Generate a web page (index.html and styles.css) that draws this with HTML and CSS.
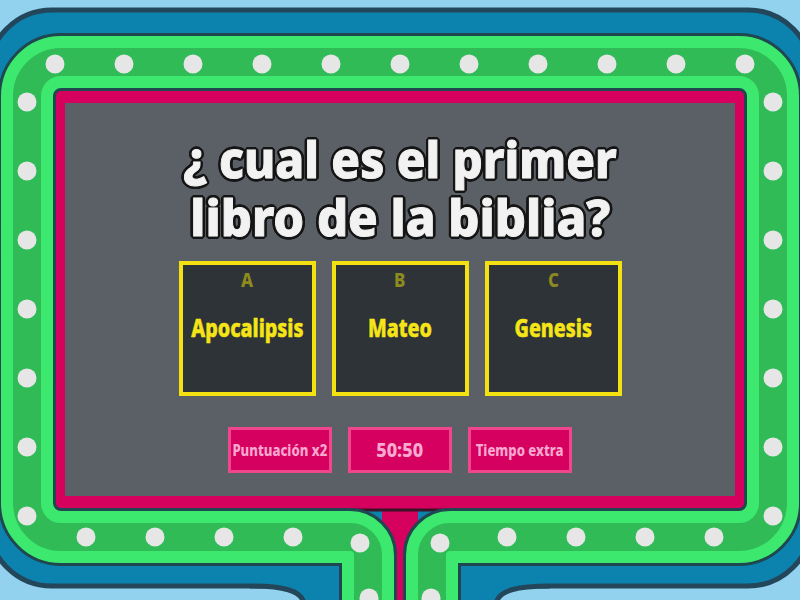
FILE: index.html
```html
<!DOCTYPE html>
<html lang="es">
<head>
<meta charset="utf-8">
<title>Gameshow quiz</title>
<link rel="stylesheet" href="styles.css">
</head>
<body>
<div class="stage">
  <svg class="frame" width="800" height="600" viewBox="0 0 800 600" aria-hidden="true">
    <rect x="0" y="0" width="800" height="600" fill="#93d2ee"/>
    <rect x="-12" y="10" width="824" height="576" rx="64" fill="#0c82af" stroke="#24465a" stroke-width="5"/>
    <path d="M250 560 L250 586 C282 586 302 590 304 604 L372 604 L372 560 Z" fill="#0c82af"/>
    <path d="M250 586 C282 586 302 590 304 604" fill="none" stroke="#24465a" stroke-width="5"/>
    <path d="M550 560 L550 586 C518 586 498 590 496 604 L428 604 L428 560 Z" fill="#0c82af"/>
    <path d="M550 586 C518 586 498 590 496 604" fill="none" stroke="#24465a" stroke-width="5"/>
    <rect x="382" y="495" width="36" height="120" fill="#d6005f"/>
    <rect x="50" y="88" width="700" height="422" rx="10" fill="#d6005f" stroke="#3a1326" stroke-width="3"/>
    <rect x="65" y="103" width="670" height="393" fill="#5a6065"/>
    <path class="band-out" d="M368 640 L368 555 A18 18 0 0 0 350 537 L61 537 A34 34 0 0 1 27 503 L27 96 A34 34 0 0 1 61 62 L739 62 A34 34 0 0 1 773 96 L773 503 A34 34 0 0 1 739 537 L450 537 A18 18 0 0 0 432 555 L432 640"/>
    <path class="band-light" d="M368 640 L368 555 A18 18 0 0 0 350 537 L61 537 A34 34 0 0 1 27 503 L27 96 A34 34 0 0 1 61 62 L739 62 A34 34 0 0 1 773 96 L773 503 A34 34 0 0 1 739 537 L450 537 A18 18 0 0 0 432 555 L432 640"/>
    <path class="band-dark" d="M368 640 L368 555 A18 18 0 0 0 350 537 L61 537 A34 34 0 0 1 27 503 L27 96 A34 34 0 0 1 61 62 L739 62 A34 34 0 0 1 773 96 L773 503 A34 34 0 0 1 739 537 L450 537 A18 18 0 0 0 432 555 L432 640"/>
    <g fill="#e6e6e6">
      <circle cx="55" cy="64" r="9.5"/><circle cx="124" cy="64" r="9.5"/><circle cx="193" cy="64" r="9.5"/>
      <circle cx="262" cy="64" r="9.5"/><circle cx="331" cy="64" r="9.5"/><circle cx="400" cy="64" r="9.5"/>
      <circle cx="469" cy="64" r="9.5"/><circle cx="538" cy="64" r="9.5"/><circle cx="607" cy="64" r="9.5"/>
      <circle cx="676" cy="64" r="9.5"/><circle cx="745" cy="64" r="9.5"/>
      <circle cx="27" cy="102" r="9.5"/><circle cx="27" cy="171" r="9.5"/><circle cx="27" cy="240" r="9.5"/>
      <circle cx="27" cy="309" r="9.5"/><circle cx="27" cy="378" r="9.5"/><circle cx="27" cy="447" r="9.5"/>
      <circle cx="27" cy="516" r="9.5"/>
      <circle cx="773" cy="102" r="9.5"/><circle cx="773" cy="171" r="9.5"/><circle cx="773" cy="240" r="9.5"/>
      <circle cx="773" cy="309" r="9.5"/><circle cx="773" cy="378" r="9.5"/><circle cx="773" cy="447" r="9.5"/>
      <circle cx="773" cy="516" r="9.5"/>
      <circle cx="86" cy="537" r="9.5"/><circle cx="155" cy="537" r="9.5"/><circle cx="224" cy="537" r="9.5"/>
      <circle cx="293" cy="537" r="9.5"/><circle cx="360" cy="543" r="9.5"/><circle cx="369" cy="598" r="9.5"/>
      <circle cx="507" cy="537" r="9.5"/><circle cx="576" cy="537" r="9.5"/><circle cx="645" cy="537" r="9.5"/>
      <circle cx="714" cy="537" r="9.5"/><circle cx="440" cy="543" r="9.5"/><circle cx="431" cy="598" r="9.5"/>
    </g>
  </svg>
  <main class="screen">
    <h1 class="question"><span class="q-line">¿ cual es el primer</span><span class="q-line q-line-2">libro de la biblia?</span></h1>
    <div class="answers">
      <div class="card"><span class="letter">A</span><span class="answer">Apocalipsis</span></div>
      <div class="card"><span class="letter">B</span><span class="answer">Mateo</span></div>
      <div class="card"><span class="letter">C</span><span class="answer">Genesis</span></div>
    </div>
    <div class="powerups">
      <button class="power"><span class="power-label">Puntuación x2</span></button>
      <button class="power power-big"><span class="power-label">50:50</span></button>
      <button class="power"><span class="power-label">Tiempo extra</span></button>
    </div>
  </main>
</div>
</body>
</html>
```
FILE: styles.css
```css
html, body {
  margin: 0;
  padding: 0;
  background: #93d2ee;
}

.stage {
  display: grid;
  width: 800px;
  height: 600px;
  overflow: hidden;
  font-family: "Noto Sans", "DejaVu Sans Condensed", sans-serif;
}

.stage > * {
  grid-area: 1 / 1;
}

.frame {
  display: block;
}

.band-out,
.band-light,
.band-dark {
  fill: none;
  stroke-linejoin: round;
}

.band-out {
  stroke: #1f4750;
  stroke-width: 58;
}

.band-light {
  stroke: #3ce86d;
  stroke-width: 52;
}

.band-dark {
  stroke: #30bb56;
  stroke-width: 28;
}

.screen {
  margin: 103px 0 0 65px;
  width: 670px;
  height: 393px;
  display: flex;
  flex-direction: column;
  align-items: center;
}

.question {
  margin: 27px 0 0;
  display: flex;
  flex-direction: column;
  align-items: center;
  font-size: 50px;
  line-height: 58px;
  font-weight: 800;
  color: #f2f2f2;
  white-space: nowrap;
  -webkit-text-stroke: 1px #f2f2f2;
  text-shadow:
    3px 0 0 #151515, -3px 0 0 #151515, 0 3px 0 #151515, 0 -3px 0 #151515,
    2px 2px 0 #151515, -2px 2px 0 #151515, 2px -2px 0 #151515, -2px -2px 0 #151515,
    3px 1px 0 #151515, -3px 1px 0 #151515, 3px -1px 0 #151515, -3px -1px 0 #151515,
    1px 3px 0 #151515, -1px 3px 0 #151515, 1px -3px 0 #151515, -1px -3px 0 #151515;
}

.q-line {
  display: block;
  transform: scaleX(0.95);
}

.q-line-2 {
  transform: scaleX(0.98);
}

.answers {
  display: flex;
  gap: 16px;
  margin-top: 15px;
}

.card {
  box-sizing: border-box;
  width: 137px;
  height: 135px;
  border: 4px solid #f4e112;
  background: #2d3337;
  display: flex;
  flex-direction: column;
  align-items: center;
  padding-top: 3px;
}

.letter {
  font-size: 20px;
  line-height: 24px;
  font-weight: 800;
  color: #8e8a1e;
  transform: scaleX(0.85);
}

.answer {
  margin-top: 22px;
  font-size: 24px;
  line-height: 28px;
  font-weight: 800;
  color: #f6e516;
  white-space: nowrap;
  -webkit-text-stroke: 0.5px #f6e516;
  transform: scaleX(0.82);
}

.powerups {
  display: flex;
  gap: 16px;
  margin-top: 31px;
}

.power {
  box-sizing: border-box;
  width: 104px;
  height: 46px;
  margin: 0;
  padding: 0;
  border: 3px solid #f0468b;
  background: #d5005f;
  color: #f9a8d0;
  font-family: inherit;
  font-size: 16px;
  font-weight: 800;
  white-space: nowrap;
  display: flex;
  align-items: center;
  justify-content: center;
}

.power-label {
  display: block;
  transform: scaleX(0.82);
}

.power-big {
  font-size: 19px;
}

.power-big .power-label {
  transform: scaleX(0.95);
}
```
